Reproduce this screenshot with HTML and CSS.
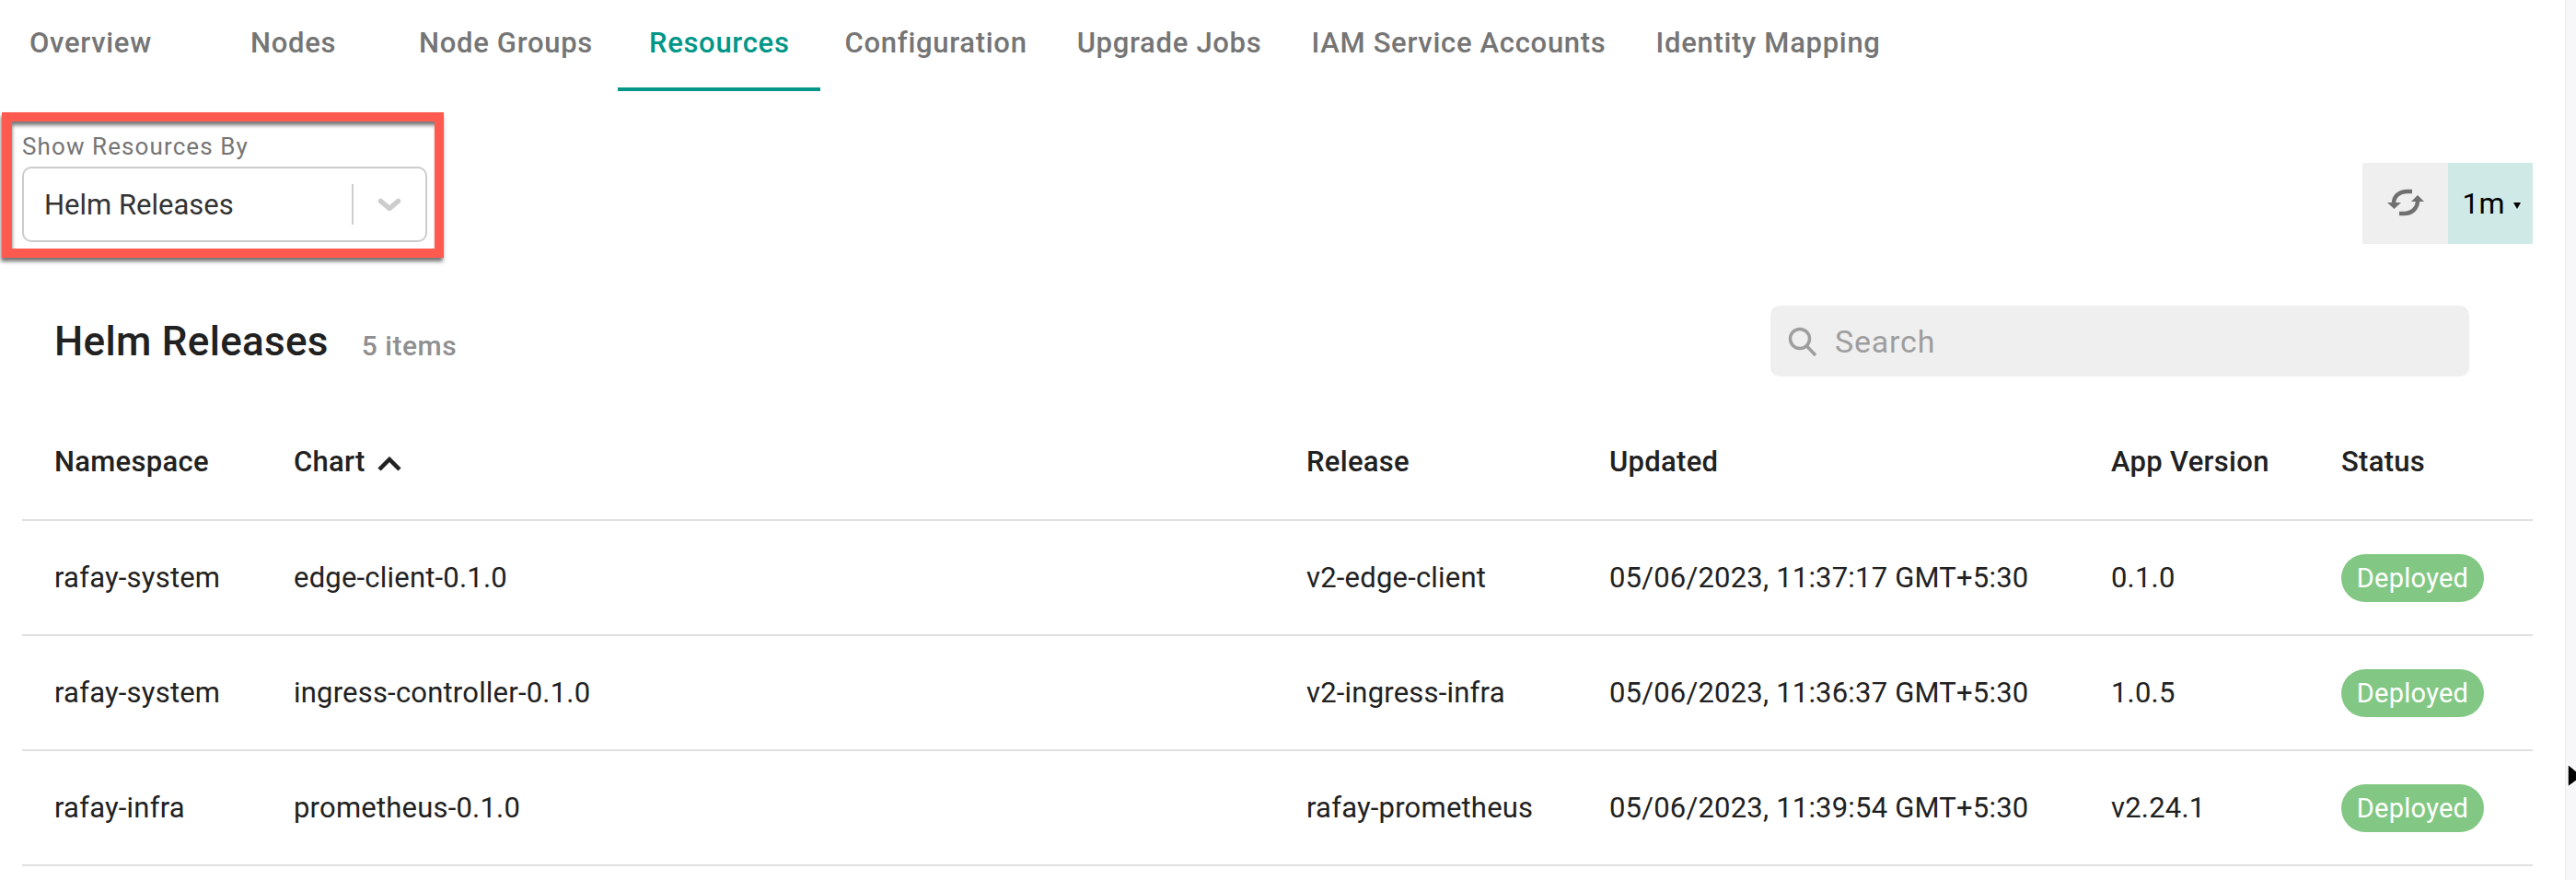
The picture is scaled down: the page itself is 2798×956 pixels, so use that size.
FILE: index.html
```html
<!DOCTYPE html><html lang="en">
<head>
  <meta charset="UTF-8">
  <meta name="viewport" content="width=device-width, initial-scale=1.0">
  <title>Resources</title>
  <link rel="stylesheet" href="styles.css">
</head>
<body>
  <div class="page">
    <main class="content">
      <nav class="tabs">
        <a class="tab tab-overview">Overview</a>
        <a class="tab tab-nodes">Nodes</a>
        <a class="tab">Node Groups</a>
        <a class="tab tab-active">Resources</a>
        <a class="tab">Configuration</a>
        <a class="tab">Upgrade Jobs</a>
        <a class="tab">IAM Service Accounts</a>
        <a class="tab">Identity Mapping</a>
      </nav>

      <div class="toolbar">
        <div class="highlight">
          <label class="field-label">Show Resources By</label>
          <div class="select">
            <span class="select-value">Helm Releases</span>
            <span class="select-sep"></span>
            <svg class="select-arrow" width="26" height="15" viewBox="0 0 26 15"><path d="M3.500 3.500 L13 11.500 L22.500 3.500" fill="none" stroke="#cccccc" stroke-width="5.500" stroke-linecap="round" stroke-linejoin="round"/></svg>
          </div>
        </div>
        <div class="refresh-group">
          <button class="refresh-btn" type="button">
            <svg width="40" height="30" viewBox="0 0 40 30">
              <path d="M7 16 C7 8 13 3 22 3 L27 3" fill="none" stroke="#707070" stroke-width="4.500"/>
              <path d="M33 13 C33 21 27 27 18 27 L13 27" fill="none" stroke="#707070" stroke-width="4.500"/>
              <path d="M0 15 L15 15 L7.500 22 Z" fill="#707070"/>
              <path d="M26 14 L40 14 L33 7 Z" fill="#707070"/>
            </svg>
          </button>
          <button class="interval-btn" type="button">1m <span class="caret"></span></button>
        </div>
      </div>

      <div class="list-head">
        <div class="list-title">
          <h2>Helm Releases</h2>
          <span class="count">5 items</span>
        </div>
        <div class="search">
          <svg width="32" height="32" viewBox="0 0 32 32"><circle cx="13" cy="13" r="10.500" fill="none" stroke="#9e9e9e" stroke-width="3.500"/><path d="M20.500 21 L30 31" stroke="#9e9e9e" stroke-width="3.500"/></svg>
          <input type="text" placeholder="Search">
        </div>
      </div>

      <table class="releases">
        <colgroup>
          <col class="col-ns"><col class="col-chart"><col class="col-release"><col class="col-updated"><col class="col-version"><col class="col-status">
        </colgroup>
        <thead>
          <tr>
            <th>Namespace</th>
            <th>Chart <svg class="sort" width="26" height="16" viewBox="0 0 26 16"><path d="M2 14 L13 3 L24 14" fill="none" stroke="#212121" stroke-width="4.500"/></svg></th>
            <th>Release</th>
            <th>Updated</th>
            <th>App Version</th>
            <th>Status</th>
          </tr>
        </thead>
        <tbody>
          <tr>
            <td>rafay-system</td>
            <td>edge-client-0.1.0</td>
            <td>v2-edge-client</td>
            <td>05/06/2023, 11:37:17 GMT+5:30</td>
            <td>0.1.0</td>
            <td><span class="badge">Deployed</span></td>
          </tr>
          <tr>
            <td>rafay-system</td>
            <td>ingress-controller-0.1.0</td>
            <td>v2-ingress-infra</td>
            <td>05/06/2023, 11:36:37 GMT+5:30</td>
            <td>1.0.5</td>
            <td><span class="badge">Deployed</span></td>
          </tr>
          <tr>
            <td>rafay-infra</td>
            <td>prometheus-0.1.0</td>
            <td>rafay-prometheus</td>
            <td>05/06/2023, 11:39:54 GMT+5:30</td>
            <td>v2.24.1</td>
            <td><span class="badge">Deployed</span></td>
          </tr>
        </tbody>
      </table>
    </main>
    <aside class="strip">
      <svg class="cursor" width="12" height="28" viewBox="0 0 12 28"><path d="M2 1 L12 9 L12 19 L2 26 Z" fill="#000" stroke="#fff" stroke-width="1.500"/></svg>
    </aside>
  </div>
</body>
</html>
```

FILE: styles.css
```css
html, body {
  margin: 0;
  height: 100%;
  background: #fff;
  overflow: hidden;
}
body {
  font-family: Roboto, "Noto Sans", sans-serif;
  color: #212121;
}
.page {
  display: flex;
  height: 956px;
}
.content {
  flex: 1;
  min-width: 0;
}
.strip {
  position: relative;
  width: 11px;
  background: #f7f7f9;
  border-left: 1px solid #ececf0;
}
.cursor {
  position: absolute;
  top: 829px;
  left: 0;
}

/* tabs */
.tabs {
  display: flex;
  height: 99px;
  padding-left: 5px;
  box-sizing: border-box;
}
.tab {
  padding: 0 27px;
  font-size: 31px;
  font-weight: 500;
  letter-spacing: .7px;
  line-height: 93px;
  color: #757575;
  white-space: nowrap;
}
.tab-overview {
  width: 240px;
  box-sizing: border-box;
}
.tab-nodes {
  width: 183px;
  box-sizing: border-box;
}
.tab-active {
  padding: 0 33px 0 34px;
  color: #009688;
  border-bottom: 4px solid #009688;
}

/* toolbar */
.toolbar {
  display: flex;
  justify-content: space-between;
  align-items: flex-start;
  padding: 23px 35px 0 2px;
}
.highlight {
  width: 480px;
  height: 158px;
  box-sizing: border-box;
  border: solid #ff5a4f;
  border-width: 10px 10px 10px 11px;
  padding: 13px 8px 0 11px;
  box-shadow: -1px 4px 4px rgba(0, 0, 0, .55), inset 1px 5px 4px -1px rgba(0, 0, 0, .55);
}
.field-label {
  display: block;
  font-size: 26px;
  letter-spacing: 1.1px;
  line-height: 28px;
  color: #757575;
}
.select {
  display: flex;
  align-items: center;
  height: 82px;
  margin-top: 8px;
  box-sizing: border-box;
  border: 2px solid #cccccc;
  border-radius: 10px;
  padding-left: 22px;
}
.select-value {
  width: 334px;
  font-size: 31px;
  color: #333;
}
.select-sep {
  width: 2px;
  height: 44px;
  background: #cccccc;
}
.select-arrow {
  margin-left: 26px;
}
.refresh-group {
  display: flex;
  margin-top: 55px;
}
.refresh-btn, .interval-btn {
  height: 88px;
  border: none;
  padding: 0;
  font-family: inherit;
}
.refresh-btn {
  width: 93px;
  background: #efefef;
}
.interval-btn {
  width: 92px;
  padding-left: 3px;
  background: #cfe9e6;
  font-size: 32px;
  color: #000;
}
.caret {
  display: inline-block;
  width: 0;
  height: 0;
  margin-left: 2px;
  vertical-align: middle;
  border-top: 7px solid #000;
  border-left: 4px solid transparent;
  border-right: 4px solid transparent;
}

/* list header */
.list-head {
  display: flex;
  justify-content: space-between;
  align-items: center;
  padding: 52px 104px 0 59px;
}
.list-title {
  display: flex;
  align-items: baseline;
  gap: 36px;
}
.list-title h2 {
  margin: 0;
  font-size: 44px;
  font-weight: 500;
  letter-spacing: .3px;
  color: #212121;
}
.count {
  font-size: 30px;
  font-weight: 500;
  letter-spacing: .5px;
  color: #8f8f8f;
}
.search {
  display: flex;
  align-items: center;
  gap: 19px;
  width: 759px;
  height: 77px;
  box-sizing: border-box;
  padding-left: 19px;
  background: #efefef;
  border-radius: 10px;
}
.search input {
  flex: 1;
  border: none;
  outline: none;
  background: none;
  padding: 0;
  font-family: inherit;
  font-size: 34px;
  letter-spacing: .8px;
}
.search input::placeholder {
  color: #9e9e9e;
}

/* table */
.releases {
  width: 2727px;
  margin: 0 0 0 24px;
  border-collapse: collapse;
  table-layout: fixed;
}
.col-ns { width: 295px; }
.col-chart { width: 1100px; }
.col-release { width: 329px; }
.col-updated { width: 545px; }
.col-version { width: 250px; }
.col-status { width: 208px; }
.releases th, .releases td {
  padding: 0;
  text-align: left;
  border-bottom: 2px solid #e0e0e0;
  white-space: nowrap;
}
.releases th:first-child, .releases td:first-child {
  padding-left: 35px;
}
.releases th {
  height: 125px;
  padding-top: 30px;
  font-size: 31px;
  font-weight: 500;
  letter-spacing: .3px;
  color: #212121;
}
.releases td {
  height: 123px;
  font-size: 31px;
  letter-spacing: .2px;
  color: #212121;
}
.sort {
  margin-left: 5px;
}
.badge {
  display: inline-block;
  width: 155px;
  height: 52px;
  line-height: 52px;
  text-align: center;
  border-radius: 26px;
  background: #82c884;
  color: #fff;
  font-size: 29px;
  letter-spacing: .25px;
}
```
